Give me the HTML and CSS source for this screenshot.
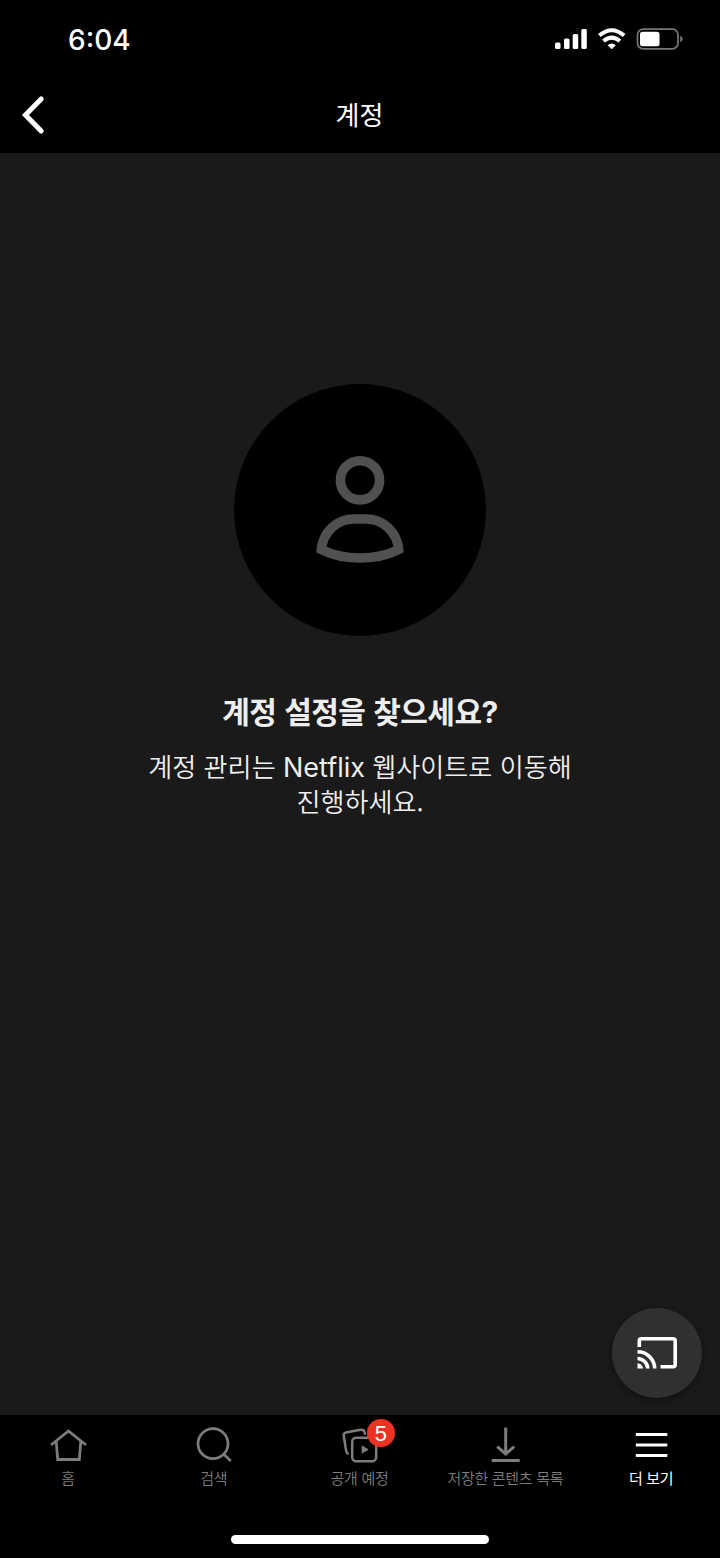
FILE: index.html
```html
<!DOCTYPE html>
<html lang="ko">
<head>
<meta charset="utf-8">
<title>계정</title>
<link rel="stylesheet" href="styles.css">
</head>
<body>
<div class="screen">
  <div class="status">
    <span class="time">6:04</span>
    <svg class="status-icons" width="130" height="24" viewBox="0 0 130 24">
      <g fill="#fff">
        <rect x="1" y="14.500" width="5.500" height="6.500" rx="1.500"/>
        <rect x="10" y="10.500" width="5.500" height="10.500" rx="1.500"/>
        <rect x="18.700" y="6" width="5.500" height="15" rx="1.500"/>
        <rect x="27.300" y="1" width="5.500" height="20" rx="1.500"/>
        <path d="M57.700 21.300L53.600 17.200Q57.700 14 61.800 17.200Z"/>
      </g>
      <g fill="none" stroke="#fff" stroke-width="4">
        <path d="M45.300 7.500Q57.700 -3 70.100 7.500"/>
        <path d="M49.500 13.100Q57.700 6.100 65.900 13.100"/>
      </g>
      <rect x="83.500" y="1.200" width="40.500" height="19.600" rx="5.500" fill="none" stroke="#777" stroke-width="1.700"/>
      <rect x="86" y="3.700" width="19.500" height="14.600" rx="2.500" fill="#fff"/>
      <path d="M126.200 7.500Q131.200 11 126.200 14.500Z" fill="#777"/>
    </svg>
  </div>
  <header class="header">
    <svg class="back" width="26" height="40" viewBox="0 0 26 40">
      <path d="M21.200 4L5.500 20L21.200 36" fill="none" stroke="#fff" stroke-width="5" stroke-linecap="round" stroke-linejoin="miter"/>
    </svg>
    <h1 class="header-title">계정</h1>
  </header>
  <main class="content">
    <div class="avatar">
      <svg width="120" height="140" viewBox="0 0 120 140" fill="none" stroke="#505050" stroke-width="9.600">
        <circle cx="60" cy="40.300" r="19.600"/>
        <path d="M21.300 109.500C22.800 92 37 79 54 79H66C83 79 97.200 92 98.700 109.500Q82 118 60 118T21.300 109.500Z"/>
      </svg>
    </div>
    <h2 class="title">계정 설정을 찾으세요<span class="latin">?</span></h2>
    <p class="text">계정 관리는 <span class="latin">Netflix</span> 웹사이트로 이동해<br>진행하세요.</p>
    <div class="cast">
      <svg width="42" height="34" viewBox="0 0 42 34" fill="none" stroke="#fff" stroke-width="3.600">
        <path d="M3.300 11V5Q3.300 2.800 5.500 2.800H37Q39.200 2.800 39.200 5V28.500Q39.200 30.700 37 30.700H24.500"/>
        <path d="M1.500 15.800A17 17 0 0 1 18.700 32.500M1.500 22.500A10.500 10.500 0 0 1 11.800 32.500"/>
        <path d="M1.500 27.300A5.500 5.500 0 0 1 7 32.500H1.500Z" fill="#fff" stroke="none"/>
      </svg>
    </div>
  </main>
  <nav class="tabs">
    <div class="tab">
      <svg width="40" height="40" viewBox="0 0 40 40" fill="none" stroke="#7d7d7d" stroke-width="2.800">
        <path d="M3 20L20.500 6L38 20M8.200 16.500L9.700 34.500H31.300L32.800 16.500"/>
      </svg>
      <span>홈</span>
    </div>
    <div class="tab">
      <svg width="40" height="40" viewBox="0 0 40 40" fill="none" stroke="#7d7d7d" stroke-width="2.700">
        <circle cx="19" cy="18.700" r="15"/><path d="M29.300 28.800L36.800 36"/>
      </svg>
      <span>검색</span>
    </div>
    <div class="tab">
      <svg width="40" height="40" viewBox="-.7 -.3 40 40" fill="none" stroke="#7d7d7d" stroke-width="2.500">
        <path d="M9 28.500Q7 28.200 6.500 26L4 10.500Q3.700 7.800 6 7.300L21 4.500Q24 4 25 7L25.400 9.500"/>
        <rect x="12.500" y="12.500" width="24" height="23.500" rx="4"/>
        <path d="M22 20V28.500L29 24.200Z" fill="#7d7d7d" stroke="none"/>
      </svg>
      <b class="badge">5</b>
      <span>공개 예정</span>
    </div>
    <div class="tab">
      <svg width="40" height="40" viewBox="-.7 0 40 40" fill="none" stroke="#7d7d7d" stroke-width="3">
        <path d="M20 2.500V28.500M11.500 21.700L20 29L28.500 21.700M6 35.500H34"/>
      </svg>
      <span>저장한 콘텐츠 목록</span>
    </div>
    <div class="tab active">
      <svg width="40" height="40" viewBox="-.3 0 40 40" fill="none" stroke="#fff" stroke-width="3.200">
        <path d="M4.500 9.500H36M4.500 20H36M4.500 30.500H36"/>
      </svg>
      <span>더 보기</span>
    </div>
  </nav>
  <div class="home-area"><div class="home-bar"></div></div>
</div>
</body>
</html>
```
FILE: styles.css
```css
* { box-sizing: border-box; }
body { margin: 0; background: #000; }
.screen {
  width: 720px;
  height: 1558px;
  display: flex;
  flex-direction: column;
  overflow: hidden;
  background: #000;
  color: #fff;
  font-family: "Noto Sans CJK KR", sans-serif;
}
.status {
  height: 77px;
  padding: 0 36px 0 68px;
  display: flex;
  justify-content: space-between;
}
.time {
  margin-top: 23px;
  font: 500 28px/34px Inter, sans-serif;
}
.status-icons { margin-top: 28px; }
.header {
  height: 76px;
  padding: 0 20px;
  display: grid;
  grid-template-columns: 26px 1fr 26px;
  align-items: center;
}
.header-title {
  margin: 0 1px 2px 0;
  font-size: 26px;
  font-weight: 400;
  line-height: 38px;
  text-align: center;
}
.content {
  position: relative;
  height: 1262px;
  padding-top: 231px;
  background: #1a1a1a;
  text-align: center;
}
.avatar {
  width: 252px;
  height: 252px;
  margin: 0 auto;
  padding-top: 56px;
  border-radius: 50%;
  background: #000;
}
.title {
  margin: 53px 0 0;
  color: #eee;
  font-size: 30px;
  font-weight: 700;
  line-height: 42px;
  letter-spacing: -.55px;
}
.text {
  margin: 18px 0 0;
  color: #eee;
  font-size: 26.1px;
  font-weight: 350;
  line-height: 35px;
}
.latin {
  font-family: Inter, sans-serif;
  line-height: 1;
}
.text .latin { font-size: 27px; font-weight: 400; }
.cast {
  position: absolute;
  right: 18px;
  bottom: 17px;
  width: 90px;
  height: 90px;
  display: flex;
  align-items: center;
  justify-content: center;
  border-radius: 50%;
  background: #303030;
  box-shadow: 0 2px 6px rgba(0, 0, 0, .4);
}
.tabs {
  height: 107px;
  margin: 0 -4px 0 -5px;
  padding-top: 10px;
  display: grid;
  grid-template-columns: repeat(5, 1fr);
}
.tab {
  position: relative;
  display: flex;
  flex-direction: column;
  align-items: center;
  color: #7d7d7d;
  font-size: 15px;
  font-weight: 350;
  line-height: 22px;
  letter-spacing: -.3px;
  white-space: nowrap;
}
.tab span { margin-top: 2px; }
.active { color: #fff; font-weight: 400; }
.badge {
  position: absolute;
  left: calc(50% + 7.500px);
  top: -6px;
  width: 28px;
  height: 28px;
  border-radius: 50%;
  background: #eb3223;
  color: #fff;
  font: 400 22px/29px "Liberation Sans", sans-serif;
  letter-spacing: 0;
  text-align: center;
}
.home-area {
  height: 36px;
  padding-top: 13px;
}
.home-bar {
  width: 258px;
  height: 9px;
  margin: 0 auto;
  border-radius: 5px;
  background: #fff;
}
```
